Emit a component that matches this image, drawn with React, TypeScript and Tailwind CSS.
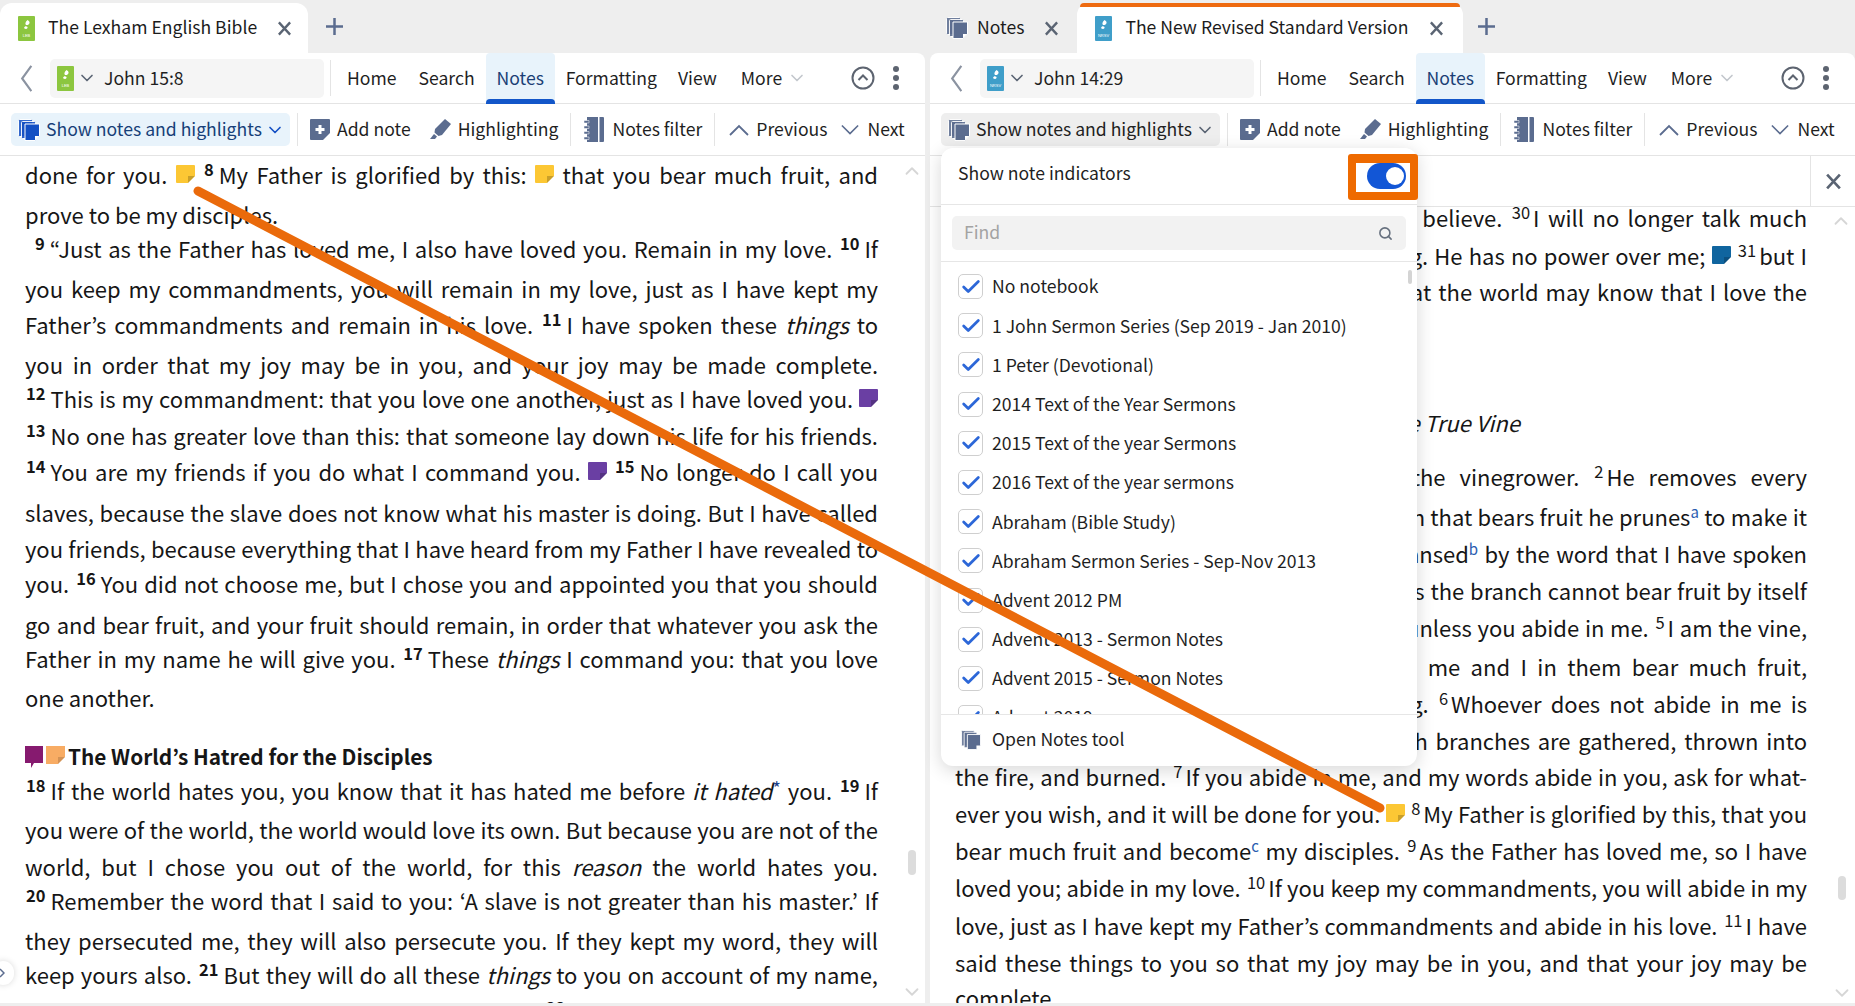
import React from "react";
import { ChevronDown, ChevronUp, Search, Check } from "lucide-react";

const Book = ({ color, label }: { color: "g" | "b"; label: string }) => (
  <svg viewBox="0 0 17 25" className="w-[17px] h-[25px] shrink-0">
    <rect width="17" height="25" rx="1" fill={color === "g" ? "#8cc63f" : "#3f9ec9"} />
    <path d="M9.500 4c2 1 3 3 1 4.500s-3.500 0-3-1.500 1-2 2-3zM7 10.500c1.500-.5 3 .5 2.500 1.500s-2 1.200-3 .5.0-1.500.5-2z" fill="#fff" />
    <text x="8.500" y="21" fontSize="4" fill="#fff" textAnchor="middle" fontFamily="Liberation Sans, sans-serif">{label}</text>
  </svg>
);

const NotesIcon = ({ c, size = "w-[22px] h-[22px]" }: { c: string; size?: string }) => (
  <svg viewBox="0 0 22 22" className={size + " shrink-0"}>
    <g fill={c} stroke="#fff" strokeWidth="1">
      <rect x="0.500" y="0.500" width="14" height="17" rx="1" opacity="0.85" />
      <rect x="3.500" y="2.500" width="14" height="17" rx="1" opacity="0.9" />
      <path d="M7 5h14.500v12l-4.500 4.500H7z" />
    </g>
    <path d="M17 21.500v-4.500h4.500z" fill="#fff" />
  </svg>
);

const AddNote = () => (
  <svg viewBox="0 0 20 21" className="w-[20px] h-[21px] shrink-0">
    <path d="M1 0h18a1 1 0 0 1 1 1v13l-7 7H1a1 1 0 0 1-1-1V1a1 1 0 0 1 1-1z" fill="#5b6c8f" />
    <path d="M8.500 6h3v3h3v3h-3v3h-3v-3h-3V9h3z" fill="#fff" />
  </svg>
);

const Pen = () => (
  <svg viewBox="0 0 21 21" className="w-[21px] h-[21px] shrink-0">
    <path d="M15 0l6 5-9 11-3.500 1-4-3.500 .5-3.500z" fill="#5b6c8f" />
    <path d="M4 15l3 2.500-2 2.500H0z" fill="#5b6c8f" />
  </svg>
);

const Filter = () => (
  <svg viewBox="0 0 20 25" className="w-[20px] h-[25px] shrink-0">
    <path d="M3 0h11v25H3z" fill="#5b6c8f" />
    <path d="M15.500 0H19a1 1 0 0 1 1 1v23a1 1 0 0 1-1 1h-3.500z" fill="#5b6c8f" />
    <path d="M0 3.500h5v2.500H0zM0 9h5v2.500H0zM0 14.500h5V17H0zM0 20h5v2.500H0z" fill="#5b6c8f" stroke="#fff" strokeWidth="0.500" />
  </svg>
);

const XIcon = ({ cn }: { cn: string }) => (
  <svg viewBox="0 0 16 16" className={cn + " shrink-0"} fill="none" stroke="#5a6473" strokeWidth="2.500">
    <path d="M2 1.500l12 13M14 1.500l-12 13" />
  </svg>
);

const PlusIcon = ({ cn }: { cn: string }) => (
  <svg viewBox="0 0 17 17" className={cn + " w-[17px] h-[17px] shrink-0"} fill="none" stroke="#5b6c8f" strokeWidth="2.500">
    <path d="M8.500 0v17M0 8.500h17" />
  </svg>
);

const Tab = ({ icon, title, close }: { icon: React.ReactNode; title: string; close: string }) => (
  <div className="contents">
    {icon}
    <span className="ml-[13px] text-[#1c1c1c] text-[17.600px] leading-none whitespace-nowrap mb-[2px]">{title}</span>
    <XIcon cn={close + " w-[15px] h-[15px]"} />
  </div>
);

const Toolbar = ({ book, ref1, active }: { book: React.ReactNode; ref1: string; active: boolean }) => (
  <>
    <div className="h-[51px] flex items-center border-b border-[#e4e4e4] shrink-0 text-[17.600px] text-[#1f1f1f] whitespace-nowrap">
      <svg viewBox="0 0 13 30" className="ml-[20px] w-[13px] h-[29px] shrink-0" fill="none" stroke="#8b93a1" strokeWidth="2.200">
        <path d="M11.500 2L2 15l9.500 13" />
      </svg>
      <div className="ml-[17px] w-[274px] h-[39px] bg-[#f5f5f5] rounded-[5px] flex items-center pl-[7px]">
        {book}
        <ChevronDown className="ml-[3px] w-[20px] h-[20px] text-[#5a6473]" strokeWidth={2} />
        <span className="ml-[7px]">{ref1}</span>
      </div>
      <div className="ml-[6px] w-px h-[36px] bg-[#e4e4e4]" />
      <span className="ml-[16px]">Home</span>
      <span className="ml-[22px]">Search</span>
      <div className="ml-[11px] w-[69px] h-[51px] bg-[#e8f3fb] flex items-center justify-center relative text-[#1b3f75] rounded-t-[4px]">
        Notes
        <div className="absolute left-0 right-0 bottom-0 h-[5px] bg-[#1256c9] rounded-t-[4px]" />
      </div>
      <span className="ml-[11px]">Formatting</span>
      <span className="ml-[21px]">View</span>
      <span className="ml-[24px]">More</span>
      <ChevronDown className="ml-[5px] w-[20px] h-[20px] text-[#c3c7cd]" strokeWidth={2} />
      <svg viewBox="0 0 24 24" className="ml-[44px] w-[24px] h-[24px] shrink-0" fill="none" stroke="#5d6470" strokeWidth="2">
        <circle cx="12" cy="12" r="10.500" />
        <path d="M7.500 14l4.500-4.500 4.500 4.500" />
      </svg>
      <svg viewBox="0 0 8 26" className="ml-[17px] w-[8px] h-[26px] shrink-0" fill="#5d6470">
        <circle cx="4" cy="4" r="3" />
        <circle cx="4" cy="13" r="3" />
        <circle cx="4" cy="22" r="3" />
      </svg>
    </div>
    <div className="h-[52px] flex items-center border-b border-[#e4e4e4] shrink-0 text-[17.600px] text-[#1f1f1f] whitespace-nowrap">
      <div className={(active ? "bg-[#e8f3fb] text-[#173f78]" : "bg-[#eeeeee] text-[#222222]") + " ml-[11px] w-[279px] h-[33px] rounded-[5px] flex items-center pl-[7px]"}>
        <NotesIcon c={active ? "#1450c4" : "#5b6c8f"} />
        <span className="ml-[6px]">Show notes and highlights</span>
        <ChevronDown className={(active ? "text-[#1450c4]" : "text-[#5a6473]") + " ml-[3px] w-[20px] h-[20px]"} strokeWidth={2} />
      </div>
      <div className="ml-[7px] w-px h-[33px] bg-[#e4e4e4]" />
      <div className="ml-[12px]"><AddNote /></div>
      <span className="ml-[7px]">Add note</span>
      <div className="ml-[19px]"><Pen /></div>
      <span className="ml-[7px]">Highlighting</span>
      <div className="ml-[12px] w-px h-[33px] bg-[#e4e4e4]" />
      <div className="ml-[13px]"><Filter /></div>
      <span className="ml-[8px]">Notes filter</span>
      <div className="ml-[12px] w-px h-[33px] bg-[#e4e4e4]" />
      <svg viewBox="0 0 20 12" className="ml-[14px] w-[20px] h-[12px] shrink-0" fill="none" stroke="#5b6c8f" strokeWidth="1.800"><path d="M1 11l9-9 9 9" /></svg>
      <span className="ml-[7px]">Previous</span>
      <svg viewBox="0 0 20 12" className="ml-[13px] w-[18px] h-[12px] shrink-0" fill="none" stroke="#5b6c8f" strokeWidth="1.800"><path d="M1 1l9 9 9-9" /></svg>
      <span className="ml-[9px]">Next</span>
    </div>
  </>
);

const Note = ({ c }: { c: string }) => (
  <svg viewBox="0 0 19 18" className={c + " inline-block w-[19px] h-[18px] align-[1px]"}>
    <path d="M1 0h17a1 1 0 0 1 1 1v10l-7 7H1a1 1 0 0 1-1-1V1a1 1 0 0 1 1-1z" fill="currentColor" />
    <path d="M12 18v-7h7z" fill="#000" opacity="0.2" />
  </svg>
);

const V = ({ n, b }: { n: string; b?: boolean }) => (
  <span className={(b ? "font-bold mr-[5px] " : "mr-[3px] ") + "text-[16.500px] relative -top-[8px] ml-[1px]"}>{n}</span>
);

const Fn = ({ n }: { n: string }) => (
  <span className="text-[15px] relative -top-[8px] text-[#2a5db0]">{n}</span>
);

const J = ({ m, children }: { m: string; children: React.ReactNode }) => (
  <div className={m + " h-[34px] leading-[34px] whitespace-nowrap [text-align-last:justify]"}>{children}</div>
);

const L = ({ m, children }: { m: string; children: React.ReactNode }) => (
  <div className={m + " h-[34px] leading-[34px] whitespace-nowrap"}>{children}</div>
);

const notebooks = [
  "No notebook",
  "1 John Sermon Series (Sep 2019 - Jan 2010)",
  "1 Peter (Devotional)",
  "2014 Text of the Year Sermons",
  "2015 Text of the year Sermons",
  "2016 Text of the year sermons",
  "Abraham (Bible Study)",
  "Abraham Sermon Series - Sep-Nov 2013",
  "Advent 2012 PM",
  "Advent 2013 - Sermon Notes",
  "Advent 2015 - Sermon Notes",
  "Advent 2019",
];

const Popup = () => (
  <div className="absolute left-[941px] top-[148px] w-[476px] h-[618px] bg-white rounded-[12px] shadow-[0_4px_18px_rgba(0,0,0,0.16)] flex flex-col text-[17.600px] text-[#1f1f1f] z-10">
    <div className="h-[57px] flex items-center pl-[17px] border-b border-[#e6e6e6] shrink-0 relative">
      <span className="mb-[5px]">Show note indicators</span>
      <div className="absolute right-[-1px] top-[6px] w-[70px] h-[46px] border-[8px] border-t-[9px] border-[#ee6a00] rounded-[3px] bg-white flex justify-end items-start">
        <div className="w-[39px] h-[26px] rounded-full bg-[#1256d6] relative mr-[4px]">
          <div className="absolute right-[2px] top-[4px] w-[18px] h-[18px] rounded-full bg-white" />
        </div>
      </div>
    </div>
    <div className="h-[57px] px-[11px] flex items-center border-b border-[#e6e6e6] shrink-0">
      <div className="w-full h-[34px] bg-[#f2f2f2] rounded-[5px] flex items-center justify-between pl-[12px] pr-[13px] text-[#a3a3a3]">
        <span className="mb-[1px]">Find</span>
        <Search className="w-[15px] h-[15px] text-[#66707e]" strokeWidth={2.500} />
      </div>
    </div>
    <div className="flex-1 overflow-hidden pt-[5px] relative">
      {notebooks.map((n) => (
        <div key={n} className="h-[39.200px] flex items-center pl-[17px] whitespace-nowrap">
          <div className="w-[25px] h-[25px] border border-[#cfcfcf] rounded-[5px] flex items-center justify-center shrink-0">
            <Check className="w-[22px] h-[22px] text-[#2c67d8]" strokeWidth={3} />
          </div>
          <span className="ml-[9px]">{n}</span>
        </div>
      ))}
      <div className="absolute right-[5px] top-[8px] w-[4px] h-[14px] bg-[#d4d4d4] rounded-full" />
    </div>
    <div className="h-[52px] border-t border-[#e6e6e6] flex items-center pl-[20px] pb-[2px] shrink-0">
      <NotesIcon c="#5b6c8f" size="w-[20px] h-[20px]" />
      <span className="ml-[11px] mb-[1px]">Open Notes tool</span>
    </div>
  </div>
);

const Chev = ({ up, cn }: { up?: boolean; cn: string }) =>
  up ? (
    <ChevronUp className={cn + " absolute w-[22px] h-[22px] text-[#d6d6d6]"} strokeWidth={2} />
  ) : (
    <ChevronDown className={cn + " absolute w-[22px] h-[22px] text-[#d6d6d6]"} strokeWidth={2} />
  );

export default function App() {
  return (
    <div className="relative w-[1855px] h-[1006px] overflow-hidden bg-[#eeeeee] flex gap-[5px] [font-family:'Noto_Sans_CJK_JP','Noto_Sans',sans-serif] text-[#161616]">
      {/* left */}
      <div className="w-[925px] h-[1003px] flex flex-col shrink-0">
        <div className="h-[53px] flex items-end shrink-0">
          <div className="w-[308px] h-[50px] bg-white rounded-t-[12px] flex items-center pl-[18px]">
            <Tab icon={<Book color="g" label="LEB" />} title="The Lexham English Bible" close="ml-[20px]" />
          </div>
          <PlusIcon cn="ml-[18px] mb-[18px]" />
        </div>
        <div className="flex-1 bg-white rounded-tr-[8px] flex flex-col relative overflow-hidden">
          <Toolbar book={<Book color="g" label="LEB" />} ref1="John 15:8" active />
          <div className="pl-[25px] pr-[47px] text-[22px]">
            <J m="mt-[1px]">done for you. <Note c="text-[#fcc734]" /> <V n="8" b />My Father is glorified by this: <Note c="text-[#fcc734]" /> that you bear much fruit, and</J>
            <L m="mt-[6px]">prove to be my disciples.</L>
            <J m="mt-[0px] pl-[9px]"><V n="9" b />“Just as the Father has loved me, I also have loved you. Remain in my love. <V n="10" b />If</J>
            <J m="mt-[6px]">you keep my commandments, you will remain in my love, just as I have kept my</J>
            <J m="mt-[2px]">Father’s commandments and remain in his love. <V n="11" b />I have spoken these <i>things</i> to</J>
            <J m="mt-[6px]">you in order that my joy may be in you, and your joy may be made complete.</J>
            <J m="mt-[0px]"><V n="12" b />This is my commandment: that you love one another, just as I have loved you. <Note c="text-[#6a3fa3]" /></J>
            <J m="mt-[3px]"><V n="13" b />No one has greater love than this: that someone lay down his life for his friends.</J>
            <J m="mt-[2px]"><V n="14" b />You are my friends if you do what I command you. <Note c="text-[#6a3fa3]" /> <V n="15" b />No longer do I call you</J>
            <J m="mt-[7px]">slaves, because the slave does not know what his master is doing. But I have called</J>
            <J m="mt-[2px]">you friends, because everything that I have heard from my Father I have revealed to</J>
            <J m="mt-[1px]">you. <V n="16" b />You did not choose me, but I chose you and appointed you that you should</J>
            <J m="mt-[7px]">go and bear fruit, and your fruit should remain, in order that whatever you ask the</J>
            <J m="mt-[0px]">Father in my name he will give you. <V n="17" b />These <i>things</i> I command you: that you love</J>
            <L m="mt-[5px]">one another.</L>
            <div className="mt-[26px] h-[34px] flex items-center font-bold text-[20.800px] whitespace-nowrap">
              <svg viewBox="0 0 18 23" className="w-[18px] h-[23px] shrink-0"><path d="M0 0h18v17H9l-3 5v-5H0z" fill="#861a6f" /></svg>
              <svg viewBox="0 0 19 18" className="ml-[3px] mb-[4px] w-[19px] h-[18px] shrink-0 text-[#f8ac64]">
                <path d="M0 0h19v11l-7 7H0z" fill="currentColor" />
                <path d="M12 18v-7h7z" fill="#000" opacity="0.15" />
              </svg>
              <span className="ml-[3px]">The World’s Hatred for the Disciples</span>
            </div>
            <J m="mt-[-1px]"><V n="18" b />If the world hates you, you know that it has hated me before <i>it hated</i><span className="text-[18px] relative -top-[5px] text-[#1d3f8a]">*</span> you. <V n="19" b />If</J>
            <J m="mt-[5px]">you were of the world, the world would love its own. But because you are not of the</J>
            <J m="mt-[3px]">world, but I chose you out of the world, for this <i>reason</i> the world hates you.</J>
            <J m="mt-[0px]"><V n="20" b />Remember the word that I said to you: ‘A slave is not greater than his master.’ If</J>
            <J m="mt-[6px]">they persecuted me, they will also persecute you. If they kept my word, they will</J>
            <J m="mt-[0px]">keep yours also. <V n="21" b />But they will do all these <i>things</i> to you on account of my name,</J>
            <J m="mt-[4px]">because they do not know the one who sent me. <V n="22" b />If I had not come and spoken</J>
          </div>
          <Chev up cn="left-[901px] top-[107px]" />
          <Chev cn="left-[901px] top-[928px]" />
          <div className="absolute left-[908px] top-[797px] w-[8px] h-[25px] bg-[#dcdcdc] rounded-full" />
        </div>
      </div>
      {/* right */}
      <div className="w-[925px] h-[1003px] flex flex-col shrink-0">
        <div className="h-[53px] flex items-end shrink-0">
          <div className="h-[50px] flex items-center pl-[16px]">
            <NotesIcon c="#5b6c8f" size="w-[22px] h-[24px]" />
            <span className="ml-[9px] text-[17.600px] leading-none text-[#1c1c1c] mb-[2px]">Notes</span>
            <XIcon cn="ml-[20px] w-[15px] h-[15px]" />
          </div>
          <div className="ml-[18px] w-[386px] h-[50px] bg-white rounded-t-[12px] relative flex items-center pl-[18px]">
            <div className="absolute left-[3px] right-[3px] top-0 h-[4px] bg-[#ee6a10] rounded-t-[8px]" />
            <Tab icon={<Book color="b" label="NRSV" />} title="The New Revised Standard Version" close="ml-[20px]" />
          </div>
          <PlusIcon cn="ml-[15px] mb-[18px]" />
        </div>
        <div className="flex-1 bg-white rounded-t-[8px] flex flex-col relative overflow-hidden">
          <Toolbar book={<Book color="b" label="NRSV" />} ref1="John 14:29" active={false} />
          <div className="h-[51px] border-b border-[#e4e4e4] shrink-0 flex justify-end">
            <div className="w-[45px] border-l border-[#e4e4e4] flex items-center justify-center">
              <XIcon cn="w-[17px] h-[17px]" />
            </div>
          </div>
          <div className="pl-[25px] pr-[48px] text-[22px]">
            <J m="-mt-[7px]">occur, so that when it does occur, you may believe. <V n="30" />I will no longer talk much</J>
            <J m="mt-[4px]">with you, for the ruler of this world is coming. He has no power over me; <Note c="text-[#10659f]" /> <V n="31" />but I</J>
            <J m="mt-[2px]">do as the Father has commanded me, so that the world may know that I love the</J>
            <L m="mt-[97px] pl-[368px] italic">Jesus the True Vine</L>
            <J m="mt-[20px]"><V n="1" />I am the true vine, and my Father is the vinegrower. <V n="2" />He removes every</J>
            <J m="mt-[6px]">branch in me that bears no fruit. Every branch that bears fruit he prunes<Fn n="a" /> to make it</J>
            <J m="mt-[3px]">bear more fruit. <V n="3" />You have already been cleansed<Fn n="b" /> by the word that I have spoken</J>
            <J m="mt-[3px]">to you. <V n="4" />Abide in me as I abide in you. Just as the branch cannot bear fruit by itself</J>
            <J m="mt-[3px]">unless it abides in the vine, neither can you unless you abide in me. <V n="5" />I am the vine,</J>
            <J m="mt-[5px]">you are the branches. Those who abide in me and I in them bear much fruit,</J>
            <J m="mt-[3px]">because apart from me you can do nothing. <V n="6" />Whoever does not abide in me is</J>
            <J m="mt-[3px]">thrown away like a branch and withers; such branches are gathered, thrown into</J>
            <J m="mt-[2px]">the fire, and burned. <V n="7" />If you abide in me, and my words abide in you, ask for what-</J>
            <J m="mt-[3px]">ever you wish, and it will be done for you. <Note c="text-[#fcc734]" /> <V n="8" />My Father is glorified by this, that you</J>
            <J m="mt-[3px]">bear much fruit and become<Fn n="c" /> my disciples. <V n="9" />As the Father has loved me, so I have</J>
            <J m="mt-[3px]">loved you; abide in my love. <V n="10" />If you keep my commandments, you will abide in my</J>
            <J m="mt-[4px]">love, just as I have kept my Father’s commandments and abide in his love. <V n="11" />I have</J>
            <J m="mt-[3px]">said these things to you so that my joy may be in you, and that your joy may be</J>
            <L m="mt-[1px]">complete.</L>
          </div>
          <Chev up cn="left-[900px] top-[157px]" />
          <Chev cn="left-[901px] top-[929px]" />
          <div className="absolute left-[908px] top-[823px] w-[8px] h-[24px] bg-[#dcdcdc] rounded-full" />
        </div>
      </div>
      <Popup />
      <div className="absolute -left-[8px] top-[961px] w-[22px] h-[24px] bg-white rounded-full shadow-[0_0_6px_rgba(0,0,0,0.15)] flex items-center justify-end pr-[9px]">
        <svg viewBox="0 0 6 10" className="w-[6px] h-[10px]" fill="none" stroke="#5b6c8f" strokeWidth="1.500"><path d="M1 1l4 4-4 4" /></svg>
      </div>
      <svg className="absolute left-0 top-0 w-[1855px] h-[1006px] pointer-events-none z-20" viewBox="0 0 1855 1006">
        <line x1="198" y1="191" x2="1380" y2="808" stroke="#ea6a0b" strokeWidth="9" strokeLinecap="round" />
      </svg>
    </div>
  );
}
